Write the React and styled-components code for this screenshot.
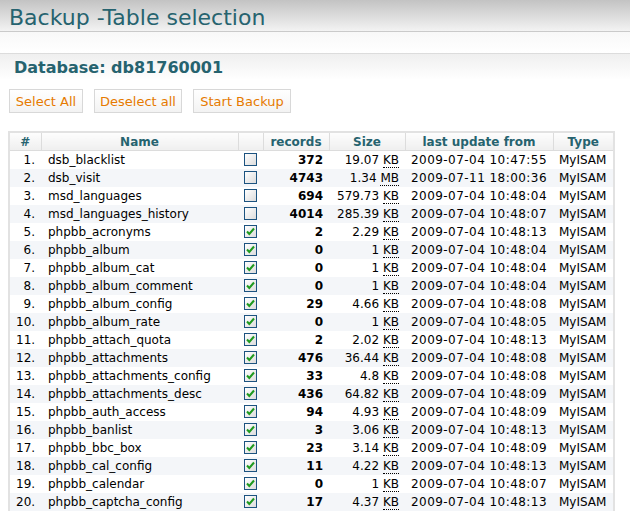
import styled, { createGlobalStyle } from 'styled-components'

const GlobalStyle = createGlobalStyle`
  body {
    margin: 0;
    background: #fff;
    font-family: "DejaVu Sans", Verdana, sans-serif;
    color: #000;
  }
`

const rows = [
  ['dsb_blacklist', false, 372, '19.07', 'KB', '2009-07-04 10:47:55'],
  ['dsb_visit', false, 4743, '1.34', 'MB', '2009-07-11 18:00:36'],
  ['msd_languages', false, 694, '579.73', 'KB', '2009-07-04 10:48:04'],
  ['msd_languages_history', false, 4014, '285.39', 'KB', '2009-07-04 10:48:07'],
  ['phpbb_acronyms', true, 2, '2.29', 'KB', '2009-07-04 10:48:13'],
  ['phpbb_album', true, 0, '1', 'KB', '2009-07-04 10:48:04'],
  ['phpbb_album_cat', true, 0, '1', 'KB', '2009-07-04 10:48:04'],
  ['phpbb_album_comment', true, 0, '1', 'KB', '2009-07-04 10:48:04'],
  ['phpbb_album_config', true, 29, '4.66', 'KB', '2009-07-04 10:48:08'],
  ['phpbb_album_rate', true, 0, '1', 'KB', '2009-07-04 10:48:05'],
  ['phpbb_attach_quota', true, 2, '2.02', 'KB', '2009-07-04 10:48:13'],
  ['phpbb_attachments', true, 476, '36.44', 'KB', '2009-07-04 10:48:08'],
  ['phpbb_attachments_config', true, 33, '4.8', 'KB', '2009-07-04 10:48:08'],
  ['phpbb_attachments_desc', true, 436, '64.82', 'KB', '2009-07-04 10:48:09'],
  ['phpbb_auth_access', true, 94, '4.93', 'KB', '2009-07-04 10:48:09'],
  ['phpbb_banlist', true, 3, '3.06', 'KB', '2009-07-04 10:48:13'],
  ['phpbb_bbc_box', true, 23, '3.14', 'KB', '2009-07-04 10:48:09'],
  ['phpbb_cal_config', true, 11, '4.22', 'KB', '2009-07-04 10:48:13'],
  ['phpbb_calendar', true, 0, '1', 'KB', '2009-07-04 10:48:07'],
  ['phpbb_captcha_config', true, 17, '4.37', 'KB', '2009-07-04 10:48:13'],
]

const Check = ({ checked }) => (
  <Box>
    {checked && (
      <svg width="11" height="11" viewBox="0 0 11 11">
        <path d="M2 5.5 L4.3 8 L9 2.5" fill="none" stroke="#1f9a1f" strokeWidth="2" />
      </svg>
    )}
  </Box>
)

const App = () => {
  return (
    <Page>
      <GlobalStyle />
      <Header>
        <Title>Backup -Table selection</Title>
      </Header>
      <Band />
      <DbBar>Database: db81760001</DbBar>

      <Buttons>
        <Button $w="74px">Select All</Button>
        <Button $w="88px">Deselect all</Button>
        <Button $w="98px">Start Backup</Button>
      </Buttons>

      <Table>
        <colgroup>
          <col width="32" />
          <col width="197" />
          <col width="25" />
          <col width="66" />
          <col width="76" />
          <col width="148" />
          <col width="61" />
        </colgroup>
        <thead>
          <tr>
            <Th>#</Th>
            <Th>Name</Th>
            <Th></Th>
            <Th>records</Th>
            <Th>Size</Th>
            <Th>last update from</Th>
            <Th>Type</Th>
          </tr>
        </thead>
        <tbody>
          {rows.map((r, i) => (
            <Row key={r[0]} $odd={i % 2 === 1}>
              <Td $align="right">{i + 1}.</Td>
              <Td $pad="7px">{r[0]}</Td>
              <Td $align="center">
                <Check checked={r[1]} />
              </Td>
              <Td $align="right" $bold>
                {r[2]}
              </Td>
              <Td $align="right">
                {r[3]} <Unit>{r[4]}</Unit>
              </Td>
              <Td $spacing="0.45px">{r[5]}</Td>
              <Td>MyISAM</Td>
            </Row>
          ))}
        </tbody>
      </Table>
    </Page>
  )
}

export default App

const Page = styled.div`
  width: 630px;
  height: 511px;
  overflow: hidden;
`

const Header = styled.div`
  height: 32px;
  background: linear-gradient(#c3c3c3, #f3f3f3);
  border-bottom: 1px solid #cacaca;
  box-sizing: border-box;
`

const Title = styled.h1`
  margin: 0;
  padding: 5px 0 0 9px;
  font-size: 22px;
  font-weight: normal;
  line-height: 26px;
  color: #26636f;
`

const Band = styled.div`
  height: 21px;
  background: linear-gradient(#f8f8f8, #fff);
  border-bottom: 1px solid #dcdcdc;
`

const DbBar = styled.div`
  height: 22px;
  padding: 4px 0 0 14px;
  background: linear-gradient(#efefef, #fff);
  font-size: 16px;
  font-weight: bold;
  line-height: 19px;
  color: #26636f;
`

const Buttons = styled.div`
  display: flex;
  gap: 11px;
  padding: 9px 0 0 9px;
`

const Button = styled.button`
  width: ${(p) => p.$w};
  height: 24px;
  padding: 0;
  border: 1px solid #d8d8d8;
  background: linear-gradient(#fff, #f3f3f3);
  font-family: "DejaVu Sans", Verdana, sans-serif;
  font-size: 13px;
  color: #e67a00;
  cursor: pointer;
`

const Table = styled.table`
  margin: 18px 0 0 8px;
  width: 605px;
  table-layout: fixed;
  border-collapse: collapse;
  border: 2px solid #e2e2e2;
  font-size: 12px;
`

const Th = styled.th`
  height: 17px;
  padding: 0;
  background: linear-gradient(#fdfdfd, #efefef);
  border: 1px solid #dcdcdc;
  color: #26636f;
  font-size: 12px;
  font-weight: bold;
  text-align: center;
`

const Row = styled.tr`
  background: ${(p) => (p.$odd ? '#f4f6f9' : '#fff')};
`

const Td = styled.td`
  height: 18px;
  padding: 0 6px 0 ${(p) => p.$pad || '6px'};
  text-align: ${(p) => p.$align || 'left'};
  font-weight: ${(p) => (p.$bold ? 'bold' : 'normal')};
  letter-spacing: ${(p) => p.$spacing || 'normal'};
  white-space: nowrap;
  line-height: 18px;
  vertical-align: middle;
`

const Unit = styled.abbr`
  text-decoration: none;
  border-bottom: 1px dotted #000;
`

const Box = styled.span`
  display: inline-flex;
  align-items: center;
  justify-content: center;
  width: 13px;
  height: 13px;
  box-sizing: border-box;
  border: 1px solid #1c5380;
  background: linear-gradient(135deg, #fff, #dcdcdc);
  vertical-align: middle;
  margin-top: -3px;
`
